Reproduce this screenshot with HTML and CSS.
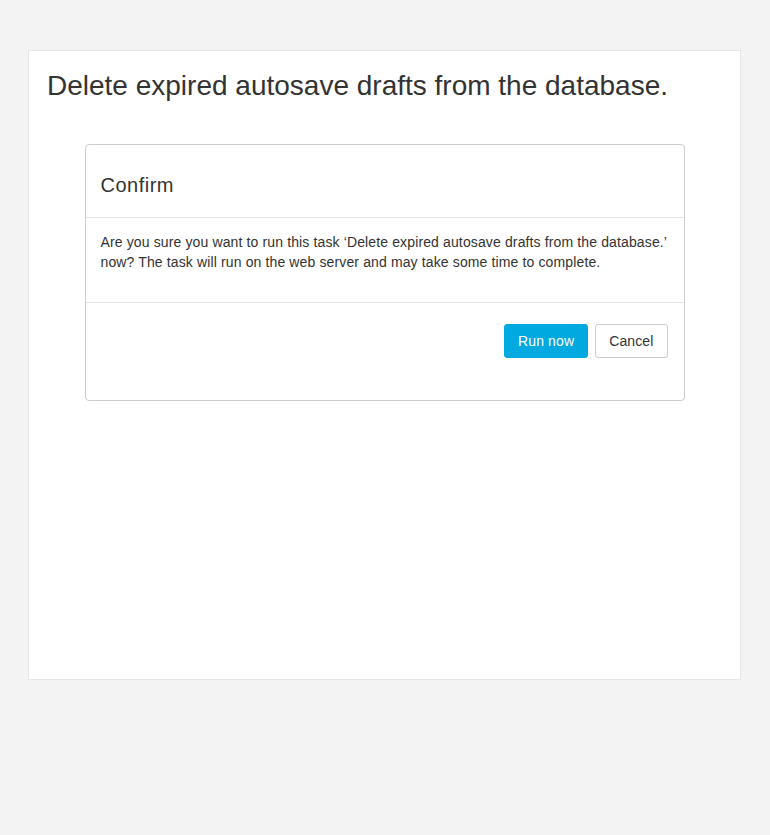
FILE: index.html
```html
<!DOCTYPE html>
<html lang="en">
<head>
    <meta charset="UTF-8">
    <meta name="viewport" content="width=device-width, initial-scale=1.0">
    <title>Scheduled task</title>
    <link rel="stylesheet" href="styles.css">
</head>
<body>
    <div class="page-panel">
        <h1 class="task-title">Delete expired autosave drafts from the database.</h1>

        <div class="confirm-box">
            <div class="confirm-header">
                <h4>Confirm</h4>
            </div>
            <div class="confirm-body">
                <p>Are you sure you want to run this task ‘Delete expired autosave drafts from the database.’ now? The task will run on the web server and may take some time to complete.</p>
            </div>
            <div class="confirm-footer">
                <button type="button" class="btn btn-primary">Run now</button>
                <button type="button" class="btn btn-secondary">Cancel</button>
            </div>
        </div>
    </div>
</body>
</html>
```

FILE: styles.css
```css
* {
    box-sizing: border-box;
}
body {
    font-family: "Liberation Sans", Arial, sans-serif;
    font-size: 14px;
    line-height: 20px;
    letter-spacing: 0.13px;
    color: #333;
    background-color: #f3f3f3;
    margin: 50px 29px 0 28px;
}
.page-panel {
    background-color: #fff;
    border: 1px solid #e6e6e6;
    min-height: 630px;
    padding: 19px 18px 0;
}
.task-title {
    font-size: 28px;
    font-weight: normal;
    line-height: 32px;
    letter-spacing: 0;
    margin: 0 0 42px;
}
.confirm-box {
    width: 600px;
    margin: 0 auto;
    border: 1px solid #ccc;
    border-radius: 4px;
}
.confirm-header {
    padding: 25px 15px 17px;
    border-bottom: 1px solid #e5e5e5;
}
.confirm-header h4 {
    margin: 0;
    font-size: 20px;
    font-weight: normal;
    line-height: 30px;
    letter-spacing: 0.5px;
}
.confirm-body {
    padding: 14px 15px 16px;
    border-bottom: 1px solid #e5e5e5;
}
.confirm-body p {
    margin: 0 0 14px;
}
.confirm-footer {
    display: flex;
    justify-content: flex-end;
    gap: 7px;
    padding: 21px 16px 42px 15px;
}
.btn {
    font-family: inherit;
    font-size: 14px;
    line-height: 20px;
    letter-spacing: 0.13px;
    height: 34px;
    padding: 6px 13px;
    border-radius: 3px;
    cursor: pointer;
}
.btn-primary {
    background-color: #00a9df;
    border: 1px solid #00a9df;
    color: #fff;
}
.btn-secondary {
    background-color: #fff;
    border: 1px solid #ccc;
    color: #333;
}
```
